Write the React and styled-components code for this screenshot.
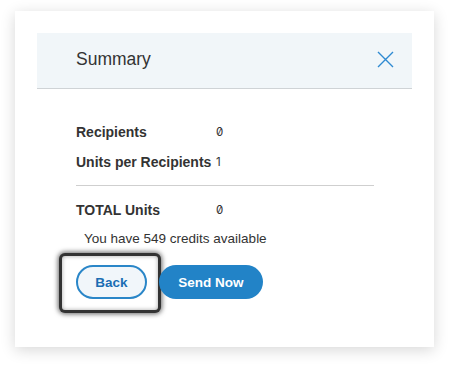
import React from 'react';
import styled, { createGlobalStyle } from 'styled-components';

const GlobalStyle = createGlobalStyle`
  body {
    margin: 0;
    background: #fff;
    font-family: "Liberation Sans", Arial, sans-serif;
  }
`;

const rows = [
  { label: 'Recipients', value: '0' },
  { label: 'Units per Recipients', value: '1' },
];

const App = () => {
  return (
    <Page>
      <GlobalStyle />
      <Card>
        <Header>
          <Title>Summary</Title>
          <CloseButton aria-label="Close">
            <svg width="17" height="17" viewBox="0 0 17 17">
              <path d="M1 1 L16 16 M16 1 L1 16" stroke="#2f8ad2" strokeWidth="1.4" fill="none" />
            </svg>
          </CloseButton>
        </Header>
        <Body>
          <Table>
            {rows.map(row => (
              <Row key={row.label}>
                <Label>{row.label}</Label>
                <Value>{row.value}</Value>
              </Row>
            ))}
          </Table>
          <Divider />
          <Row>
            <Label>TOTAL Units</Label>
            <Value>0</Value>
          </Row>
          <Credits>You have 549 credits available</Credits>
          <Actions>
            <FocusRing>
              <BackButton>Back</BackButton>
            </FocusRing>
            <SendButton>Send Now</SendButton>
          </Actions>
        </Body>
      </Card>
    </Page>
  );
};

const Page = styled.div`
  padding: 11px 15px 19px 15px;
`;

const Card = styled.div`
  width: 419px;
  height: 336px;
  box-sizing: border-box;
  background: #fff;
  padding: 22px;
  box-shadow: 0 3px 14px rgba(0, 0, 0, 0.16);
`;

const Header = styled.div`
  height: 55px;
  display: flex;
  align-items: center;
  justify-content: space-between;
  background: #f1f6f9;
  border-bottom: 1px solid #cfd3d6;
  padding: 0 18px 0 39px;
`;

const Title = styled.div`
  font-size: 17.5px;
  color: #333;
  padding-bottom: 2px;
`;

const CloseButton = styled.div`
  width: 17px;
  height: 17px;
  display: flex;
  padding-bottom: 2px;
`;

const Body = styled.div`
  padding: 34px 0 0 39px;
`;

const Table = styled.div`
  display: flex;
  flex-direction: column;
  gap: 13px;
`;

const Row = styled.div`
  display: grid;
  grid-template-columns: 140px auto;
  align-items: center;
  height: 17px;
`;

const Label = styled.div`
  font-size: 14px;
  font-weight: bold;
  color: #333;
`;

const Value = styled.div`
  font-family: Inter, "Liberation Sans", sans-serif;
  font-feature-settings: "zero" 1;
  font-size: 11.5px;
  color: #333;
`;

const Divider = styled.div`
  width: 298px;
  height: 1px;
  background: #cfcfcf;
  margin: 15px 0 15px 0;
`;

const Credits = styled.div`
  font-size: 13.5px;
  color: #333;
  margin: 13px 0 0 8px;
`;

const Actions = styled.div`
  display: flex;
  align-items: flex-start;
  margin-top: 10px;
`;

const FocusRing = styled.div`
  margin-left: -14px;
  padding: 9px 11px 11px 14px;
  background: #fff;
  border-radius: 3px;
  box-shadow: 0 0 0 3px #333, 0 0 5px 4px rgba(0, 0, 0, 0.6),
    inset 0 0 4px rgba(0, 0, 0, 0.35);
`;

const PillButton = styled.button`
  height: 34px;
  border-radius: 17px;
  font-family: "Liberation Sans", Arial, sans-serif;
  font-size: 13.5px;
  font-weight: bold;
  box-sizing: border-box;
  cursor: pointer;
`;

const BackButton = styled(PillButton)`
  width: 71px;
  display: block;
  background: #f1f6fa;
  color: #1b6db3;
  border: 2px solid #2a86c8;
`;

const SendButton = styled(PillButton)`
  width: 104px;
  margin-top: 9px;
  margin-left: 1px;
  background: #2283c7;
  color: #fff;
  border: none;
`;

export default App;
